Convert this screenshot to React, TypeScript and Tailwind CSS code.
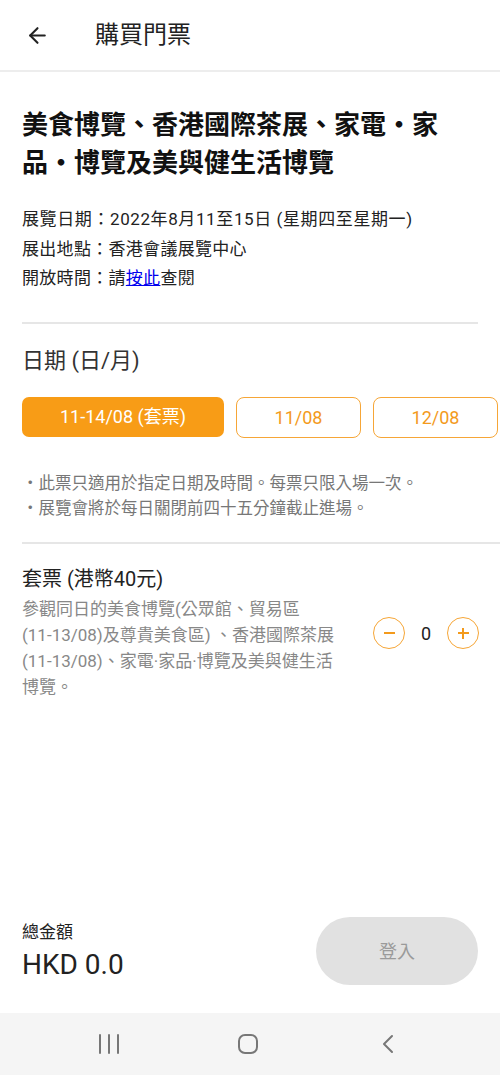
import React from "react";
import { ArrowLeft } from "lucide-react";

const font = { fontFamily: "Roboto, 'Noto Sans CJK TC', 'Noto Sans', sans-serif" };

const desc =
  "參觀同日的美食博覽(公眾館、貿易區(11-\u206013/08)及尊貴美食區) 、香港國際茶展(11-\u206013/08)、家電·家品·博覽及美與健生活博覽。";

export default function App() {
  return (
    <div
      className="w-[500px] h-[1075px] bg-white flex flex-col overflow-hidden text-[#222]"
      style={font}
    >
      {/* Header */}
      <div className="h-[70px] flex items-center shrink-0">
        <ArrowLeft className="ml-[25px] w-[25px] h-[25px] text-[#222]" strokeWidth={2} />
        <span className="ml-[45px] text-[24px] text-[#222]">購買門票</span>
      </div>
      <div className="h-[2px] bg-[#ededed] shrink-0" />

      {/* Content */}
      <div className="pl-[22px] flex flex-col">
        <h1 className="mt-[34px] max-w-[432px] text-[26px] leading-[38px] font-bold text-[#111]">
          美食博覽、香港國際茶展、家電・家品・博覽及美與健生活博覽
        </h1>
        <div className="mt-[23px] text-[17px] leading-[29.5px] tracking-[0.3px] text-[#222]">
          <div className="tracking-[0.6px]">展覽日期：2022年8月11至15日 (星期四至星期一)</div>
          <div>展出地點：香港會議展覽中心</div>
          <div>
            開放時間：請<span className="text-[#0000ee] underline">按此</span>查閱
          </div>
        </div>
        <div className="mt-[28px] mr-[22px] h-[2px] bg-[#e6e6e6]" />

        <div className="mt-[23px] text-[22px] leading-[28px] text-[#333]">日期 (日/月)</div>

        <div className="mt-[22px] flex gap-[12px] whitespace-nowrap">
          <div className="w-[202px] h-[40px] shrink-0 rounded-[7px] bg-[#f89c16] text-white text-[18px] flex items-center justify-center">
            11-14/08 (套票)
          </div>
          <div className="w-[125px] h-[41px] shrink-0 rounded-[8px] border-[1.5px] border-[#f6a637] text-[#f39a1c] text-[18px] flex items-center justify-center">
            11/08
          </div>
          <div className="w-[125px] h-[41px] shrink-0 rounded-[8px] border-[1.5px] border-[#f6a637] text-[#f39a1c] text-[18px] flex items-center justify-center">
            12/08
          </div>
        </div>

        <div className="mt-[33px] text-[16.5px] leading-[25px] text-[#777]">
          <div>・此票只適用於指定日期及時間。每票只限入場一次。</div>
          <div>・展覽會將於每日關閉前四十五分鐘截止進場。</div>
        </div>
      </div>
      <div className="mt-[21px] ml-[22px] h-[2px] bg-[#e6e6e6]" />

      <div className="pl-[22px] mt-[22px] flex items-center">
        <div className="w-[326px] shrink-0">
          <div className="text-[20px] leading-[26px] text-[#222]">套票 (港幣40元)</div>
          <div className="mt-[4px] text-[17px] leading-[26.3px] text-[#888]">{desc}</div>
        </div>
        <div className="ml-[25px] flex items-center">
          <div className="w-[32px] h-[32px] rounded-full border-[1.5px] border-[#f6a637] flex items-center justify-center">
            <div className="w-[11px] h-[1.5px] bg-[#f39a1c]" />
          </div>
          <div className="w-[42px] text-center text-[18px] text-[#222]">0</div>
          <div className="w-[32px] h-[32px] rounded-full border-[1.5px] border-[#f6a637] flex items-center justify-center relative">
            <div className="w-[11px] h-[1.5px] bg-[#f39a1c]" />
            <div className="absolute w-[1.5px] h-[11px] bg-[#f39a1c]" />
          </div>
        </div>
      </div>

      <div className="flex-1" />

      {/* Footer */}
      <div className="px-[22px] pb-[28px] flex items-center justify-between shrink-0">
        <div className="flex flex-col">
          <div className="text-[17px] leading-[22px] text-[#222]">總金額</div>
          <div className="mt-[5px] text-[28px] leading-[34px] text-[#222]">HKD 0.0</div>
        </div>
        <div className="w-[162px] h-[68px] rounded-full bg-[#e1e1e1] flex items-center justify-center text-[18px] text-[#9a9a9a]">
          登入
        </div>
      </div>

      {/* Nav bar */}
      <div className="h-[62px] bg-[#f5f5f5] shrink-0 flex items-center pl-[97px]">
        <svg width="24" height="24" viewBox="0 0 24 24">
          <g stroke="#777" strokeWidth="2" strokeLinecap="round">
            <line x1="3" y1="3" x2="3" y2="21" />
            <line x1="12" y1="3" x2="12" y2="21" />
            <line x1="21" y1="3" x2="21" y2="21" />
          </g>
        </svg>
        <svg width="24" height="24" viewBox="0 0 24 24" className="ml-[115px]">
          <rect x="3" y="3" width="18" height="18" rx="6" fill="none" stroke="#777" strokeWidth="2" />
        </svg>
        <svg width="24" height="24" viewBox="0 0 24 24" className="ml-[116px]">
          <polyline points="16,4 8,12 16,20" fill="none" stroke="#777" strokeWidth="2" strokeLinecap="round" strokeLinejoin="round" />
        </svg>
      </div>
    </div>
  );
}
